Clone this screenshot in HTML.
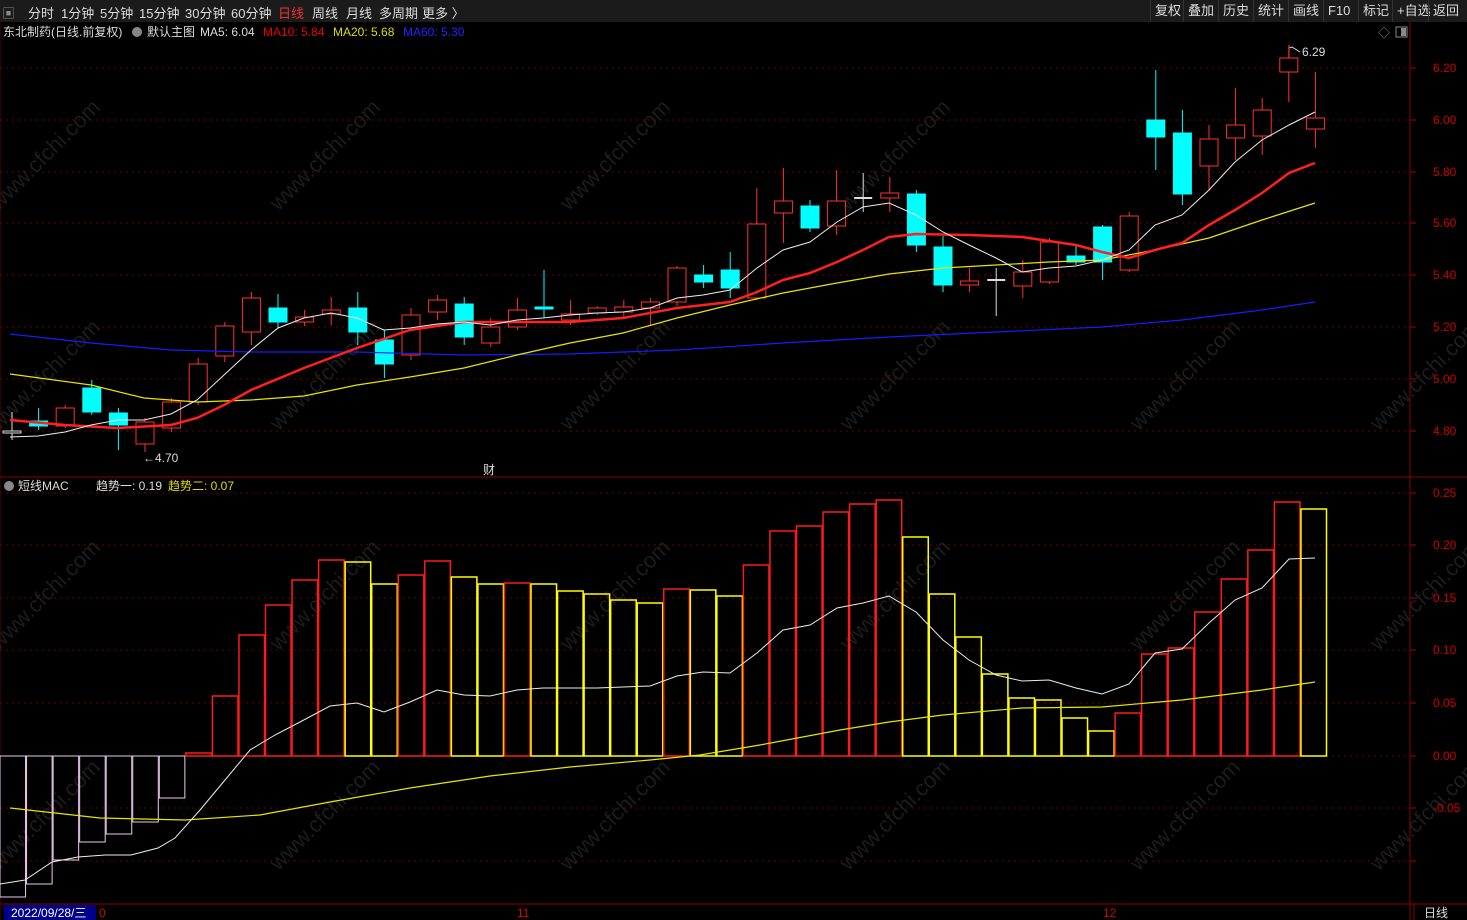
<!DOCTYPE html>
<html><head><meta charset="utf-8"><style>
body{margin:0;background:#000;width:1467px;height:920px;overflow:hidden;font-family:"Liberation Sans","Noto Sans CJK SC",sans-serif;}
#top{position:absolute;left:0;top:0;width:1467px;height:22px;background:#1b1b1b;color:#ddd;font-size:13px;}
#top span{position:absolute;top:3px;}
.btn{position:absolute;top:0;height:22px;line-height:22px;border-left:1px solid #333;padding:0 4px;color:#ddd;font-size:13px}
svg{position:absolute;left:0;top:0}
</style></head><body>
<svg id="s" width="1467" height="920" font-family="Liberation Sans, Noto Sans CJK SC, sans-serif"></svg>
<div id="top">
<span style="left:2px;color:#888">▣</span>
<span style="left:28px">分时</span><span style="left:61px">1分钟</span><span style="left:100px">5分钟</span><span style="left:139px">15分钟</span><span style="left:185px">30分钟</span><span style="left:231px">60分钟</span><span style="left:278px;color:#e33">日线</span><span style="left:312px">周线</span><span style="left:346px">月线</span><span style="left:379px">多周期</span><span style="left:422px">更多 〉</span>
<div class="btn" style="left:1150px">复权</div><div class="btn" style="left:1183px">叠加</div><div class="btn" style="left:1218px">历史</div><div class="btn" style="left:1253px">统计</div><div class="btn" style="left:1288px">画线</div><div class="btn" style="left:1323px">F10</div><div class="btn" style="left:1358px">标记</div><div class="btn" style="left:1392px">+自选</div><div class="btn" style="left:1428px">返回</div>
</div>
<script>
const s=document.getElementById('s');let h='';
const X=i=>12+26.6*i;
// watermarks
for(const [wx,wy] of [[50,160],[330,160],[620,160],[900,160],[50,380],[330,380],[620,380],[900,380],[1190,380],[1430,380],[50,600],[330,600],[620,600],[900,600],[1190,600],[1430,600],[50,820],[330,820],[620,820],[900,820],[1190,820],[1430,820]])
 h+=`<text x="${wx}" y="${wy}" transform="rotate(-45 ${wx} ${wy})" fill="#1c1c1c" font-size="22" text-anchor="middle">www.cfchi.com</text>`;
// grids main
const pl=[[68,'6.20'],[120,'6.00'],[172,'5.80'],[223,'5.60'],[275,'5.40'],[327,'5.20'],[379,'5.00'],[431,'4.80']];
for(const [y,t] of pl){h+=`<line x1="0" x2="1410" y1="${y}" y2="${y}" stroke="#6a0000" stroke-dasharray="2,4"/><line x1="1410" x2="1416" y1="${y}" y2="${y}" stroke="#a00"/><text x="1433" y="${y+4}" fill="#c00" font-size="12">${t}</text>`;}
const ml=[[493,'0.25'],[545,'0.20'],[598,'0.15'],[650,'0.10'],[703,'0.05'],[756,'0.00'],[808,'-0.05'],[861,'']];
for(const [y,t] of ml){h+=`<line x1="0" x2="1410" y1="${y}" y2="${y}" stroke="#6a0000" stroke-dasharray="2,4"/><line x1="1410" x2="1416" y1="${y}" y2="${y}" stroke="#a00"/><text x="1433" y="${y+4}" fill="#c00" font-size="12">${t}</text>`;}
h+=`<line x1="1410" x2="1410" y1="22" y2="920" stroke="#8a0000"/><line x1="0" x2="1467" y1="477" y2="477" stroke="#8a0000"/><line x1="0" x2="1467" y1="904" y2="904" stroke="#8a0000"/><line x1="0" x2="0" y1="22" y2="920" stroke="#600"/>`;
// candles [o,c,h,l,type] type r=red,c=cyan,w=white
const C=[[431,433,412,440,'w'],[421,426,408,430,'c'],[426,408,405,428,'r'],[388,412,380,415,'c'],[413,425,408,450,'c'],[444,422,418,452,'r'],[428,402,398,432,'r'],[402,364,358,405,'r'],[356,326,322,362,'r'],[332,298,292,345,'r'],[308,322,294,328,'c'],[322,317,310,326,'r'],[314,310,297,325,'r'],[308,332,292,345,'c'],[340,364,330,378,'c'],[355,315,308,360,'r'],[312,300,295,320,'r'],[304,337,297,345,'c'],[343,327,318,347,'r'],[327,310,298,330,'r'],[307,309,270,318,'c'],[320,314,300,325,'r'],[313,308,306,315,'r'],[312,307,300,318,'r'],[308,302,298,326,'r'],[302,268,266,306,'r'],[275,282,265,288,'c'],[270,288,252,298,'c'],[298,224,188,300,'r'],[213,201,168,243,'r'],[206,228,200,232,'c'],[226,201,170,235,'r'],[198,198,173,212,'w'],[198,193,177,212,'r'],[194,245,190,252,'c'],[247,285,236,292,'c'],[285,281,268,292,'r'],[280,280,268,316,'w'],[286,272,260,298,'r'],[282,242,238,284,'r'],[256,262,245,265,'c'],[227,262,225,280,'c'],[270,216,212,272,'r'],[120,137,70,170,'c'],[133,194,110,205,'c'],[166,139,125,190,'r'],[138,125,88,160,'r'],[136,110,98,155,'r'],[72,58,45,102,'r'],[129,118,72,148,'r']];
C.forEach((c,i)=>{const x=X(i),[o,cl,hi,lo,t]=c;const col=t=='r'?'#ff3030':t=='c'?'#00ffff':'#ddd';const top=Math.min(o,cl),bot=Math.max(o,cl);
 h+=`<line x1="${x}" x2="${x}" y1="${hi}" y2="${lo}" stroke="${col}"/>`;
 if(bot-top<2)h+=`<line x1="${x-9}" x2="${x+9}" y1="${top}" y2="${top}" stroke="${col}" stroke-width="2"/>`;
 else h+=`<rect x="${x-9}" y="${top}" width="18" height="${bot-top}" fill="${t=='c'?col:'#000'}" stroke="${col}"/>`;});
const pts=a=>a.map(p=>p.join(',')).join(' ');
const L=(a,c,w)=>h+=`<polyline points="${pts(a)}" fill="none" stroke="${c}" stroke-width="${w}"/>`;
L([[10,334],[91,343],[171,350],[251,352],[357,352],[464,355],[570,354],[677,350],[783,343],[889,337],[996,332],[1102,327],[1182,320],[1262,310],[1315,302]],'#1a1aff',1.2);
L([[10,374],[91,385],[144,398],[197,402],[251,400],[304,396],[357,385],[410,377],[464,368],[517,355],[570,343],[623,333],[677,318],[730,305],[783,293],[837,283],[889,274],[943,268],[996,265],[1049,262],[1102,260],[1155,250],[1209,238],[1262,220],[1315,203]],'#e6e600',1.2);
L([[10,420],[65,425],[118,428],[171,425],[197,418],[224,405],[251,390],[304,368],[357,348],[410,330],[464,322],[517,322],[570,322],[623,318],[677,308],[730,302],[757,292],[783,280],[810,273],[837,262],[863,250],[889,237],[916,234],[969,235],[1022,237],[1076,245],[1102,252],[1129,258],[1155,250],[1182,243],[1209,225],[1235,210],[1262,193],[1289,173],[1315,163]],'#ff2020',2.5);
L([[10,437],[38,436],[65,432],[91,425],[118,420],[144,420],[171,414],[197,400],[224,375],[251,350],[278,328],[304,318],[331,313],[357,318],[384,330],[410,328],[437,324],[464,322],[490,325],[517,320],[543,318],[570,315],[597,313],[623,312],[650,308],[677,298],[703,295],[730,290],[757,268],[783,250],[810,242],[837,222],[863,207],[889,203],[916,215],[943,232],[969,245],[996,258],[1022,272],[1049,268],[1076,266],[1102,260],[1129,250],[1155,225],[1182,215],[1209,190],[1235,162],[1262,140],[1289,125],[1315,112]],'#eee',1);
// MAC bars
const B=[897,884,860,842,834,822,798,753,696,635,605,580,560,562,584,575,561,577,584,583,584,591,594,600,603,589,590,596,565,531,526,512,504,500,537,594,637,674,698,700,718,731,713,654,648,612,579,550,502,509];
const Y=[0,0,0,0,0,0,0,0,0,0,0,0,0,1,1,0,0,1,1,0,1,1,1,1,1,0,1,1,0,0,0,0,0,0,1,1,1,1,1,1,1,1,0,0,0,0,0,0,0,1];
B.forEach((b,i)=>{const x0=-1+26.55*i;const w=26.55;
 if(i<7)h+=`<rect x="${x0+1}" y="756" width="${w-1}" height="${b-756}" fill="none" stroke="#f0c8f0"/>`;
 else h+=`<rect x="${x0+1}" y="${b}" width="${w-1}" height="${756-b}" fill="none" stroke="${Y[i]?'#ffff00':'#ff1a1a'}" stroke-width="1.5"/>`;});
L([[10,808],[100,818],[185,820],[260,815],[330,802],[410,788],[490,776],[570,767],[650,760],[700,755],[760,745],[840,730],[889,722],[943,715],[1022,708],[1102,707],[1182,700],[1262,690],[1315,682]],'#e6e600',1.2);
L([[0,884],[25,880],[52,862],[78,857],[105,855],[131,855],[158,848],[175,838],[200,810],[225,780],[250,750],[275,735],[300,722],[330,706],[357,703],[384,712],[410,702],[437,690],[464,695],[490,696],[517,690],[543,688],[570,688],[597,688],[623,687],[650,686],[677,676],[703,672],[730,673],[757,653],[783,630],[810,625],[837,608],[863,603],[889,596],[916,612],[943,640],[969,660],[996,675],[1022,681],[1049,680],[1076,688],[1102,694],[1129,684],[1155,653],[1182,649],[1209,623],[1235,600],[1262,588],[1289,559],[1315,558]],'#eee',1);
// texts
h+=`<text x="3" y="36" fill="#ddd" font-size="12">东北制药(日线.前复权)</text><circle cx="137" cy="32" r="5" fill="#888"/><text x="147" y="36" fill="#ddd" font-size="12">默认主图</text><text x="200" y="36" fill="#ddd" font-size="12">MA5: 6.04</text><text x="263" y="36" fill="#e00" font-size="12">MA10: 5.84</text><text x="333" y="36" fill="#dd0" font-size="12">MA20: 5.68</text><text x="403" y="36" fill="#22f" font-size="12">MA60: 5.30</text>`;
h+=`<text x="1378" y="37" fill="#888" font-size="12">◇</text><rect x="1396" y="27" width="11" height="10" fill="none" stroke="#888"/><rect x="1401" y="28" width="5" height="8" fill="#888"/>`;
h+=`<text x="1302" y="56" fill="#ddd" font-size="12">6.29</text><polyline points="1300,52 1292,47 1289,48" fill="none" stroke="#ddd"/><line x1="1289" y1="45" x2="1289" y2="58" stroke="#ff3030"/>`;
h+=`<text x="143" y="462" fill="#ddd" font-size="12">←4.70</text><text x="483" y="474" fill="#ddd" font-size="12">财</text>`;
h+=`<circle cx="9" cy="486" r="5" fill="#888"/><text x="18" y="490" fill="#ddd" font-size="12">短线MAC</text><text x="96" y="490" fill="#ddd" font-size="12">趋势一: 0.19</text><text x="168" y="490" fill="#dd0" font-size="12">趋势二: 0.07</text>`;
h+=`<rect x="4" y="905" width="92" height="15" fill="#00008b"/><text x="11" y="917" fill="#fff" font-size="12">2022/09/28/三</text><text x="99" y="917" fill="#d00" font-size="12">0</text><text x="517" y="917" fill="#d00" font-size="12">11</text><text x="1103" y="917" fill="#d00" font-size="12">12</text><line x1="1414" x2="1414" y1="904" y2="920" stroke="#8a0000"/><text x="1424" y="917" fill="#ddd" font-size="12">日线</text>`;
s.innerHTML=h;
</script>
</body></html>
